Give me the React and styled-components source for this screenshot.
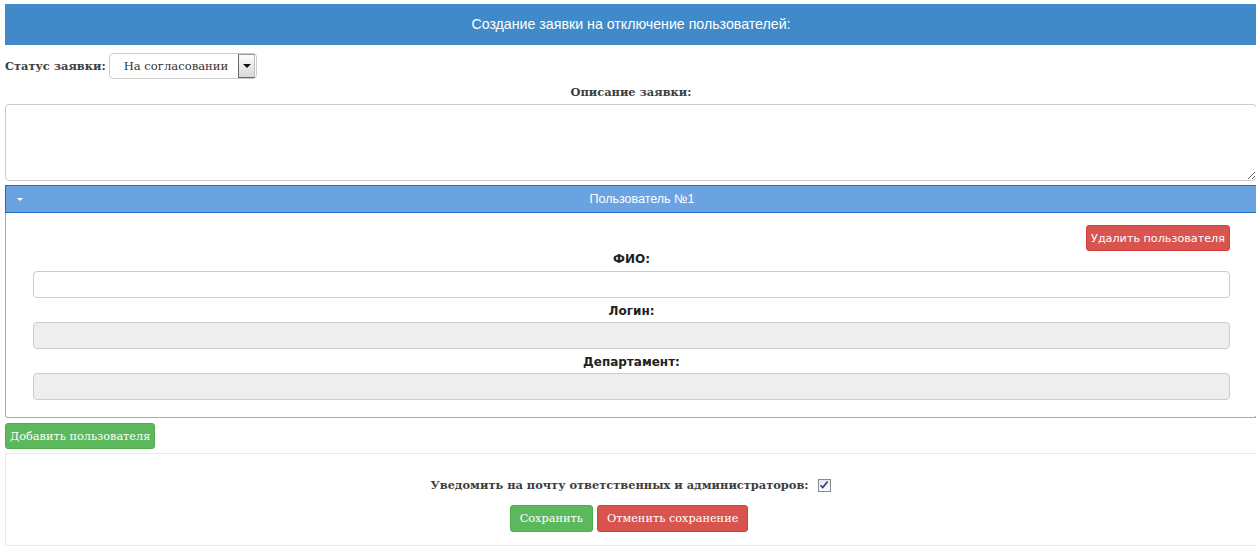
import styled, { createGlobalStyle } from "styled-components";

const GlobalStyle = createGlobalStyle`
    body {
        margin: 0;
        overflow: hidden;
        background: #fff;
        font-family: "DejaVu Serif", serif;
    }
`;

export default function App() {
    return (
        <>
            <GlobalStyle />
            <Page>
                <Header>Создание заявки на отключение пользователей:</Header>

                <StatusRow>
                    <Label>Статус заявки:</Label>
                    <Select>
                        <span className="value">На согласовании</span>
                        <span className="arrow" />
                    </Select>
                </StatusRow>

                <CenterLabel>Описание заявки:</CenterLabel>
                <Description />

                <Accordion>
                    <AccordionHead>
                        <Caret />
                        Пользователь №1
                    </AccordionHead>
                    <AccordionBody>
                        <ActionRow>
                            <Button $variant="danger" $sans>Удалить пользователя</Button>
                        </ActionRow>
                        <FieldLabel $first>ФИО:</FieldLabel>
                        <Input />
                        <FieldLabel>Логин:</FieldLabel>
                        <Input disabled />
                        <FieldLabel>Департамент:</FieldLabel>
                        <Input disabled />
                    </AccordionBody>
                </Accordion>

                <AddRow>
                    <Button $variant="success">Добавить пользователя</Button>
                </AddRow>

                <SaveBox>
                    <NotifyRow>
                        <Label>Уведомить на почту ответственных и администраторов:</Label>
                        <Check>
                            <svg width="10" height="10" viewBox="0 0 10 10">
                                <path d="M1.5 5.2 L3.8 7.6 L8.6 1.6" fill="none" stroke="#2a3f8c" strokeWidth="1.6" />
                            </svg>
                        </Check>
                    </NotifyRow>
                    <Buttons>
                        <Button $variant="success" $big>Сохранить</Button>
                        <Button $variant="danger" $big>Отменить сохранение</Button>
                    </Buttons>
                </SaveBox>
            </Page>
        </>
    );
}

const Page = styled.div`
    width: 1252px;
    padding: 4px 0 0 5px;
`;

const Header = styled.div`
    height: 41px;
    line-height: 41px;
    background: #418aca;
    color: #fff;
    text-align: center;
    font-family: "Liberation Sans", Arial, sans-serif;
    font-size: 14.2px;
`;

const StatusRow = styled.div`
    display: flex;
    align-items: center;
    gap: 3px;
    margin-top: 8px;
`;

const Label = styled.span`
    font-family: "DejaVu Serif", serif;
    font-weight: bold;
    font-size: 11.4px;
    color: #3e3e3e;
`;

const Select = styled.div`
    display: flex;
    align-items: center;
    justify-content: space-between;
    box-sizing: border-box;
    width: 148px;
    height: 26px;
    padding: 0 1px 0 14px;
    border: 1px solid #ccc;
    border-radius: 4px;
    font-size: 11.6px;
    color: #333;

    .arrow {
        position: relative;
        box-sizing: border-box;
        width: 17px;
        height: 24px;
        border: 1px solid #666;
        border-top-color: #999;
        border-right-color: #bbb;
        background: linear-gradient(#fdfdfd, #d8d8d8);

        &::after {
            content: "";
            position: absolute;
            left: 4px;
            top: 9px;
            border-left: 4px solid transparent;
            border-right: 4px solid transparent;
            border-top: 4px solid #111;
        }
    }
`;

const CenterLabel = styled(Label)`
    display: block;
    text-align: center;
    line-height: 16px;
    margin: 5px 0 4px;
`;

const Description = styled.textarea`
    display: block;
    box-sizing: border-box;
    width: 100%;
    height: 77px;
    margin: 0;
    border: 1px solid #ccc;
    border-radius: 4px;
    resize: vertical;
    outline: none;
`;

const Accordion = styled.div`
    margin-top: 4px;
`;

const AccordionHead = styled.div`
    position: relative;
    height: 26px;
    line-height: 26px;
    padding-left: 22px;
    border: 1px solid #1d6cc4;
    background: #6ba3e1;
    color: #fff;
    text-align: center;
    font-family: "Liberation Sans", Arial, sans-serif;
    font-size: 12.5px;
`;

const Caret = styled.span`
    position: absolute;
    left: 11px;
    top: 12px;
    border-left: 3px solid transparent;
    border-right: 3px solid transparent;
    border-top: 3px solid #fff;
`;

const AccordionBody = styled.div`
    padding: 12px 26px 17px 27px;
    border: 1px solid #aaa;
    border-top: none;
    border-radius: 0 0 3px 3px;
`;

const ActionRow = styled.div`
    display: flex;
    justify-content: flex-end;
`;

const FieldLabel = styled.div`
    text-align: center;
    font-family: "DejaVu Sans", Verdana, sans-serif;
    font-weight: bold;
    font-size: 12px;
    color: #222;
    line-height: 16px;
    margin: ${p => (p.$first ? "0 0 4px" : "5px 0 3px")};
`;

const Input = styled.input`
    display: block;
    box-sizing: border-box;
    width: 100%;
    height: 27px;
    margin: 0;
    border: 1px solid #ccc;
    border-radius: 4px;
    background: #fff;
    outline: none;

    &:disabled {
        background: #eee;
    }
`;

const Button = styled.button`
    box-sizing: border-box;
    height: ${p => (p.$big ? "27px" : "26px")};
    padding: 0 ${p => (p.$big ? "9px" : "4px")};
    border: 1px solid ${p => (p.$variant === "danger" ? "#d43f3a" : "#4cae4c")};
    border-radius: 3px;
    background: ${p => (p.$variant === "danger" ? "#d9534f" : "#5cb85c")};
    color: #fff;
    font-family: ${p => (p.$sans ? '"DejaVu Sans", Verdana, sans-serif' : '"DejaVu Serif", serif')};
    font-size: ${p => (p.$sans ? "11.2px" : "11.3px")};
    cursor: pointer;
`;

const AddRow = styled.div`
    margin-top: 5px;
    display: flex;
`;

const SaveBox = styled.div`
    margin-top: 4px;
    padding: 23px 0 13px;
    border: 1px solid #e8e8e8;
`;

const NotifyRow = styled.div`
    display: flex;
    justify-content: center;
    align-items: center;
    gap: 9px;
    height: 16px;
    padding-right: 1px;
`;

const Check = styled.span`
    display: flex;
    align-items: center;
    justify-content: center;
    box-sizing: border-box;
    width: 13px;
    height: 13px;
    border: 1px solid #8a8a8a;
    background: linear-gradient(#e8eaf0, #fafbfd);
`;

const Buttons = styled.div`
    display: flex;
    justify-content: center;
    gap: 4px;
    margin-top: 12px;
    padding-right: 4px;
`;
